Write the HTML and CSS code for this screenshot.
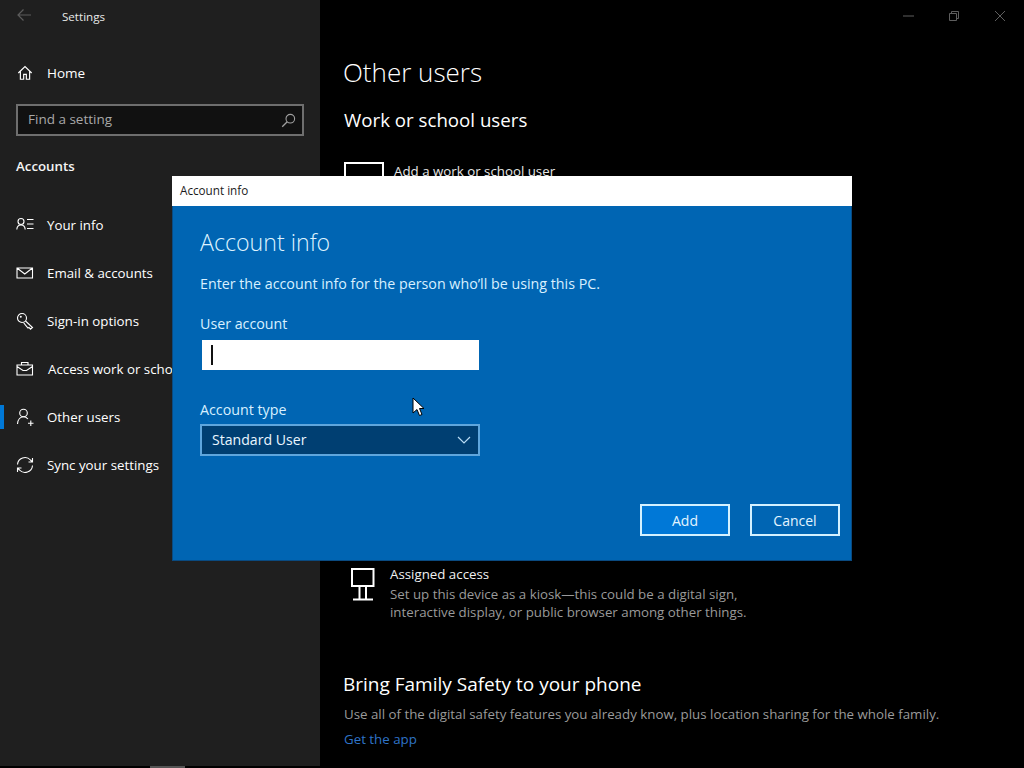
FILE: index.html
```html
<!DOCTYPE html>
<html lang="en">
<head>
<meta charset="utf-8">
<title>Settings</title>
<link rel="stylesheet" href="styles.css">
</head>
<body>
<div class="app">
  <aside class="sidebar">
    <div class="titlebar">
      <svg class="back" width="16" height="16" viewBox="0 0 16 16"><path d="M15 8H2M7.500 2.500 2 8l5.500 5.500" fill="none" stroke="#5c5c5c" stroke-width="1.200"/></svg>
      <span class="app-title">Settings</span>
    </div>
    <a class="home">
      <svg class="ico" width="16" height="16" viewBox="0 0 18 18"><path d="M1.500 9 9 1.800 16.500 9M3.800 7.200V16H7.500V10.500H10.500V16H14.200V7.200" fill="none" stroke="#fff" stroke-width="1.300"/></svg>
      <span>Home</span>
    </a>
    <div class="search">
      <span class="search-text">Find a setting</span>
      <svg width="15" height="15" viewBox="0 0 15 15"><circle cx="9.300" cy="5.700" r="4.300" fill="none" stroke="#a0a0a0" stroke-width="1.100"/><path d="M6.200 8.800 1.200 13.800" stroke="#a0a0a0" stroke-width="1.300"/></svg>
    </div>
    <div class="section">Accounts</div>
    <nav class="nav">
      <a class="item">
        <svg class="ico" width="18" height="18" viewBox="0 0 18 18"><circle cx="5" cy="5.500" r="3" fill="none" stroke="#fff" stroke-width="1.100"/><path d="M.8 13.500C1 10.500 3 9 5 9s4 1.500 4.200 4.500M11 3.500h6.500M11 8h6.500M11 12.500h6.500" fill="none" stroke="#fff" stroke-width="1.100"/></svg>
        <span>Your info</span>
      </a>
      <a class="item">
        <svg class="ico" width="18" height="18" viewBox="0 0 18 18"><path d="M1 4h15.500v10H1zM1 4l7.750 6L16.500 4" fill="none" stroke="#fff" stroke-width="1.100"/></svg>
        <span>Email &amp; accounts</span>
      </a>
      <a class="item">
        <svg class="ico" width="18" height="18" viewBox="0 0 18 18"><circle cx="6" cy="6" r="4.500" fill="none" stroke="#fff" stroke-width="1.100"/><circle cx="4.800" cy="4.800" r="1" fill="#fff"/><path d="M9.500 9 16.500 15.500 14.500 17.200 13 15.500 12 16 9.500 13.200 7.500 10.500" fill="none" stroke="#fff" stroke-width="1.100"/></svg>
        <span>Sign-in options</span>
      </a>
      <a class="item">
        <svg class="ico" width="18" height="18" viewBox="0 0 18 18"><path d="M1 5h15.500v10H1zM5.500 5V2.500h6.500V5M1 6.500l6 4h3.500l6-4" fill="none" stroke="#fff" stroke-width="1.100"/></svg>
        <span class="nudge">Access work or school</span>
      </a>
      <a class="item current">
        <svg class="ico" width="18" height="18" viewBox="0 0 18 18"><circle cx="7.500" cy="5" r="3.800" fill="none" stroke="#fff" stroke-width="1.100"/><path d="M1.500 16c.3-4.500 3-7.200 6-7.200 1.800 0 3.300.8 4.400 2.200M12 15.200h5.500M14.800 12.500v5.500" fill="none" stroke="#fff" stroke-width="1.100"/></svg>
        <span>Other users</span>
      </a>
      <a class="item">
        <svg class="ico" width="18" height="18" viewBox="0 0 18 18"><path d="M1.500 8.500A7.500 7.500 0 0 1 14.500 4L16.500 6M16.500 2v4h-4M16.500 9.500A7.500 7.500 0 0 1 3.500 14L1.500 12M1.500 16v-4h4" fill="none" stroke="#fff" stroke-width="1.100"/></svg>
        <span>Sync your settings</span>
      </a>
    </nav>
  </aside>

  <main class="main">
    <div class="winbar">
      <svg width="12" height="12" viewBox="0 0 12 12"><path d="M1 6h11" stroke="#5e5e5e"/></svg>
      <svg width="12" height="12" viewBox="0 0 12 12"><path d="M1.500 3.500h7v7h-7zM3.500 3.500v-2h7v7h-2" fill="none" stroke="#5e5e5e"/></svg>
      <svg width="12" height="12" viewBox="0 0 12 12"><path d="M1 1l10 10M11 1 1 11" stroke="#5e5e5e"/></svg>
    </div>
    <h1 class="page-title">Other users</h1>
    <h2 class="sub-title">Work or school users</h2>
    <div class="add-row">
      <span class="add-box">+</span>
      <span>Add a work or school user</span>
    </div>
    <div class="kiosk">
      <svg class="kiosk-ico" width="26" height="34" viewBox="0 0 26 34"><path d="M2 2h21.500v17H2zM9.500 19v13M16 19v13M3 32.500h20" fill="none" stroke="#fff" stroke-width="2"/></svg>
      <div class="kiosk-text">
        <div class="kiosk-title">Assigned access</div>
        <div class="muted kiosk-desc">Set up this device as a kiosk—this could be a digital sign,<br>interactive display, or public browser among other things.</div>
      </div>
    </div>
    <h2 class="family-title">Bring Family Safety to your phone</h2>
    <p class="muted family-text">Use all of the digital safety features you already know, plus location sharing for the whole family.</p>
    <a class="link">Get the app</a>
  </main>
</div>

<section class="dialog">
  <header class="dialog-bar">Account info</header>
  <div class="dialog-body">
    <h2 class="dialog-title">Account info</h2>
    <p class="dialog-text">Enter the account info for the person who’ll be using this PC.</p>
    <label class="field-label">User account</label>
    <div class="input"><i class="caret"></i></div>
    <label class="field-label second">Account type</label>
    <div class="select">
      <span class="select-value">Standard User</span>
      <svg width="14" height="8" viewBox="0 0 14 8"><path d="M1 1l6 6 6-6" fill="none" stroke="#b9dcf5" stroke-width="1.200"/></svg>
    </div>
    <div class="actions">
      <button class="btn primary">Add</button>
      <button class="btn">Cancel</button>
    </div>
  </div>
</section>

<svg class="pointer" width="13" height="20" viewBox="0 0 13 20"><path d="M1 1v15l4-3.500 2.500 6 2.500-1-2.500-6H12z" fill="#fff" stroke="#000"/></svg>
<div class="taskpeek"></div>
</body>
</html>
```
FILE: styles.css
```css
* { box-sizing: border-box; }
html, body { margin: 0; height: 100%; background: #000; overflow: hidden; }
body { font-family: "Open Sans", "Noto Sans", sans-serif; font-size: 13.300px; color: #fff; position: relative; }
h1, h2, p { margin: 0; font-weight: 400; }

.app { display: flex; width: 1024px; height: 766px; }

.sidebar { width: 320px; background: #1f1f1f; flex: none; padding-left: 16px; display: flex; flex-direction: column; }
.titlebar { height: 32px; display: flex; align-items: center; color: #e8e8e8; font-size: 11.600px; }
.back { margin-right: 30px; margin-top: -2px; }

.home { display: flex; align-items: center; height: 48px; margin-top: 17px; font-size: 13.500px; }
.ico { flex: none; }
.home span { margin-left: 14px; }
.home .ico { margin-left: 1px; }

.search { width: 288px; height: 32px; margin-top: 7px; border: 2px solid #6e6e6e; background: #111; display: flex; align-items: center; justify-content: space-between; padding: 0 6px 0 10px; color: #a8a8a8; }
.search-text { font-size: 13.500px; line-height: 26px; margin-top: -3px; }
.section { margin-top: 20px; font-weight: 600; font-size: 13.300px; line-height: 20px; color: #f4f4f4; }

.nav { display: flex; flex-direction: column; margin-top: 25px; margin-left: -16px; }
.item { height: 48px; display: flex; align-items: center; padding-left: 16px; gap: 13px; white-space: nowrap; position: relative; }
.item.current::before { content: ""; position: absolute; left: 0; top: 12px; width: 4px; height: 24px; background: #0078d7; }
.nudge { margin-left: 1px; }

.main { flex: 1; padding-left: 23px; display: flex; flex-direction: column; position: relative; }
.winbar { position: absolute; top: 10px; right: 18px; display: flex; gap: 34px; }
.page-title { font-size: 26px; font-weight: 300; line-height: 36px; margin-top: 54px; }
.sub-title { font-size: 18.700px; line-height: 28px; margin: 16px 0 0 1px; }
.add-row { display: flex; gap: 10px; margin: 28px 0 0 1px; height: 40px; color: #e8e8e8; }
.add-box { width: 40px; height: 40px; border: 2px solid #fff; display: flex; align-items: center; justify-content: center; flex: none; font-size: 24px; font-weight: 300; }
.kiosk { display: flex; margin-top: 363px; margin-left: 7px; }
.kiosk-ico { flex: none; margin-top: 2px; }
.kiosk-text { margin-left: 14px; }
.kiosk-title { color: #f0f0f0; line-height: 18px; }
.kiosk-desc { line-height: 18px; margin-top: 2px; }
.muted { color: #9a9a9a; }
.family-title { font-size: 19px; line-height: 28px; margin-top: 49px; }
.family-text { margin: 6px 0 0 1px; line-height: 20px; }
.link { margin: 5px 0 0 1px; line-height: 20px; color: #2f74c8; }

.dialog { position: absolute; left: 172px; top: 176px; width: 680px; height: 385px; display: flex; flex-direction: column; background: #0065b3; }
.dialog-bar { height: 30px; flex: none; background: #fff; color: #1a1a1a; font-size: 11.700px; line-height: 29px; padding-left: 8px; }
.dialog-body { flex: 1; padding: 19px 11px 24px 27px; display: flex; flex-direction: column; color: #d8f0ff; border: 1px solid #0a4a80; border-top: 0; font-size: 14.250px; }
.dialog-title { font-size: 23.200px; font-weight: 300; line-height: 34px; color: #dff3ff; }
.dialog-text { margin-top: 15px; line-height: 20px; }
.field-label { margin-top: 20px; line-height: 20px; display: block; }
.input { width: 277px; height: 30px; margin: 6px 0 0 2px; background: #fff; display: flex; align-items: center; padding-left: 9px; }
.caret { width: 1.500px; height: 20px; background: #111; display: block; }
.field-label.second { margin-top: 30px; }
.select { width: 280px; height: 32px; margin-top: 4px; background: #003f72; border: 2px solid #5fa6dd; display: flex; align-items: center; justify-content: space-between; padding: 0 7px 0 10px; color: #eaf6ff; }
.select-value { font-size: 14.100px; margin-top: -2px; }
.actions { margin-top: auto; display: flex; justify-content: flex-end; gap: 20px; }
.btn { width: 90px; height: 32px; border: 2px solid #d3f1ff; background: transparent; color: #e3f5ff; font: inherit; font-size: 14px; padding: 0; }
.btn.primary { background: #0078d7; }

.pointer { position: absolute; left: 412px; top: 397px; }
.taskpeek { position: absolute; left: 150px; top: 766px; width: 35px; height: 2px; background: #555; }
```
